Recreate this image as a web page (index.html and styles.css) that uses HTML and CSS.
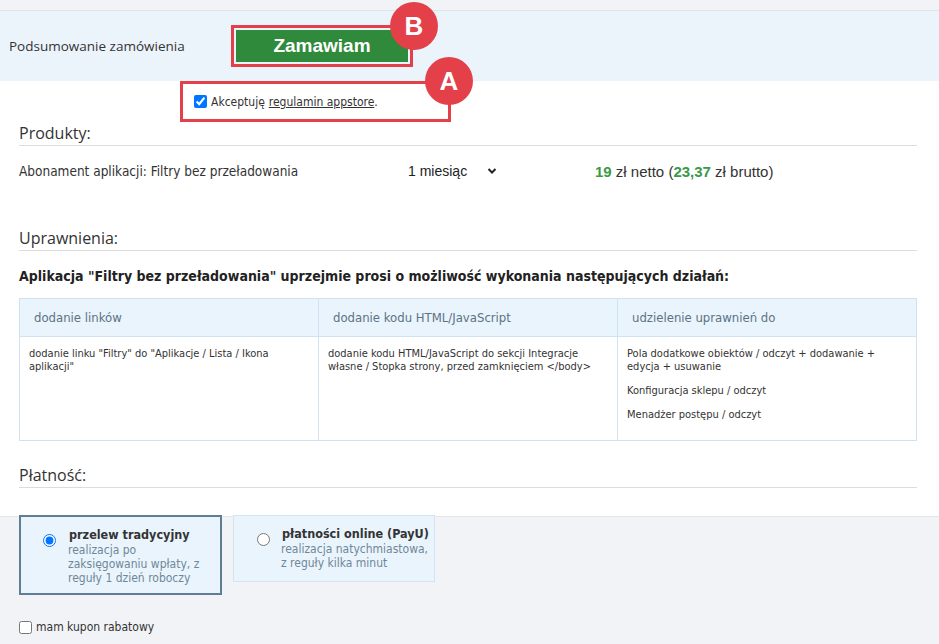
FILE: index.html
```html
<!DOCTYPE html>
<html lang="pl">
<head>
  <meta charset="UTF-8" />
  <meta name="viewport" content="width=device-width, initial-scale=1.0" />
  <title>Podsumowanie zamówienia</title>
  <link rel="stylesheet" href="styles.css">
</head>
<body>
  <div class="topbar"></div>

  <div class="summary">
    <div class="summary-title">Podsumowanie zamówienia</div>
    <div class="mark mark-button">
      <button class="order-button">Zamawiam</button>
      <span class="badge badge-b">B</span>
    </div>
  </div>

  <div class="mark mark-accept">
    <label class="accept"><input type="checkbox" checked> Akceptuję <a href="#">regulamin appstore</a>.</label>
    <span class="badge badge-a">A</span>
  </div>

  <div class="content">
    <h3 class="section-title">Produkty:</h3>
    <div class="product">
      <div class="product-name">Abonament aplikacji: Filtry bez przeładowania</div>
      <div class="product-period">1 miesiąc
        <svg class="chevron" width="10" height="8" viewBox="0 0 10 8"><path d="M1.5 2 L5 5.5 L8.5 2" fill="none" stroke="#222" stroke-width="2"/></svg>
      </div>
      <div class="product-price"><b>19</b> zł netto (<b>23,37</b> zł brutto)</div>
    </div>

    <h3 class="section-title perms-title">Uprawnienia:</h3>
    <p class="perms-intro">Aplikacja "Filtry bez przeładowania" uprzejmie prosi o możliwość wykonania następujących działań:</p>

    <table class="perms">
      <thead>
        <tr>
          <th>dodanie linków</th>
          <th>dodanie kodu HTML/JavaScript</th>
          <th>udzielenie uprawnień do</th>
        </tr>
      </thead>
      <tbody>
        <tr>
          <td><p>dodanie linku "Filtry" do "Aplikacje / Lista / Ikona aplikacji"</p></td>
          <td><p>dodanie kodu HTML/JavaScript do sekcji Integracje własne / Stopka strony, przed zamknięciem &lt;/body&gt;</p></td>
          <td>
            <p>Pola dodatkowe obiektów / odczyt + dodawanie + edycja + usuwanie</p>
            <p>Konfiguracja sklepu / odczyt</p>
            <p>Menadżer postępu / odczyt</p>
          </td>
        </tr>
      </tbody>
    </table>

    <h3 class="section-title pay-title">Płatność:</h3>
  </div>

  <div class="payment">
    <div class="pay-options">
      <label class="pay-option selected">
        <input type="radio" name="pay" checked>
        <span class="pay-text"><b>przelew tradycyjny</b><span>realizacja po zaksięgowaniu wpłaty, z reguły 1 dzień roboczy</span></span>
      </label>
      <label class="pay-option">
        <input type="radio" name="pay">
        <span class="pay-text"><b>płatności online (PayU)</b><span>realizacja natychmiastowa, z reguły kilka minut</span></span>
      </label>
    </div>
    <label class="coupon"><input type="checkbox"> mam kupon rabatowy</label>
  </div>
</body>
</html>
```

FILE: styles.css
```css
body {
  margin: 0;
  background: #ffffff;
  color: #333;
  font-family: "DejaVu Sans Condensed", "DejaVu Sans", sans-serif;
}
.topbar {
  height: 10px;
  background: #f2f3f7;
  border-bottom: 1px solid #e1e4e9;
}
.summary {
  display: flex;
  align-items: center;
  height: 70px;
  background: #ecf4fb;
  padding-left: 9px;
}
.summary-title {
  width: 222px;
  font-family: "Open Sans", sans-serif;
  font-size: 13.5px;
  color: #333;
}
.mark {
  position: relative;
  border: 3px solid #e3404a;
}
.mark-button {
  padding: 2px;
  display: flex;
}
.order-button {
  width: 172px;
  height: 32px;
  background: #2f8a3c;
  color: #fff;
  border: none;
  font-family: "Liberation Sans", Arial, sans-serif;
  font-weight: bold;
  font-size: 19px;
  cursor: pointer;
}
.badge {
  position: absolute;
  width: 48px;
  height: 48px;
  border-radius: 50%;
  background: #e3404a;
  color: #fff;
  font-family: "Liberation Sans", Arial, sans-serif;
  font-weight: bold;
  font-size: 26px;
  display: flex;
  align-items: center;
  justify-content: center;
}
.badge-b {
  top: -26px;
  right: -28px;
}
.badge-a {
  top: -27px;
  right: -25px;
}
.mark-accept {
  margin-left: 180px;
  width: 254px;
  height: 35px;
  display: flex;
  align-items: center;
  padding-left: 11px;
}
.accept {
  font-size: 12px;
  color: #333;
  display: flex;
  align-items: center;
}
.accept input {
  margin: 0 4px 0 0;
  width: 13px;
  height: 13px;
}
.accept a {
  color: #333;
  margin-left: 4px;
}
.content {
  padding: 0 22px 0 19px;
}
.section-title {
  margin: 0;
  font-family: "Open Sans", sans-serif;
  font-weight: normal;
  font-size: 16px;
  color: #333;
  padding: 0 0 2px;
  line-height: 20px;
  border-bottom: 1px solid #dcdcdc;
}
.section-title:first-child {
  margin-top: 1px;
}
.product {
  display: flex;
  align-items: center;
  height: 50px;
  font-size: 13.5px;
}
.product-name {
  width: 389px;
  color: #333;
}
.product-period {
  width: 187px;
  font-family: "Liberation Sans", Arial, sans-serif;
  font-size: 14px;
  color: #222;
  display: flex;
  align-items: center;
}
.chevron {
  margin-left: 20px;
}
.product-price {
  font-family: "Liberation Sans", Arial, sans-serif;
  font-size: 15px;
  color: #333;
}
.product-price b {
  color: #3a9a47;
}
.perms-title {
  margin-top: 32px;
}
.perms-intro {
  margin: 17px 0 14px;
  font-weight: bold;
  font-size: 14px;
  color: #222;
}
.perms {
  width: 100%;
  border-collapse: collapse;
  table-layout: fixed;
  font-size: 11px;
}
.perms th {
  background: #eaf4fd;
  border: 1px solid #cfe3f3;
  text-align: left;
  font-weight: normal;
  font-size: 13px;
  color: #5b7384;
  height: 37px;
  padding: 0 14px;
}
.perms td {
  border: 1px solid #cfe3f3;
  vertical-align: top;
  height: 93px;
  padding: 10px 14px 0 9px;
  color: #333;
}
.perms td p {
  margin: 0 0 11px;
  line-height: 13px;
}
.pay-title {
  margin-top: 24px;
}
.payment {
  margin-top: 28px;
  background: #f2f3f7;
  border-top: 1px solid #e3e5ea;
  padding: 0 19px 10px;
  min-height: 126px;
}
.pay-options {
  display: flex;
  gap: 11px;
  align-items: flex-start;
  margin-top: -2px;
}
.pay-option {
  display: flex;
  align-items: flex-start;
  background: #eaf4fd;
  border: 1px solid #d3e5f5;
  width: 202px;
  box-sizing: border-box;
  padding: 10px 2px 11px 20px;
}
.pay-option.selected {
  border: 2px solid #5f7d95;
  width: 203px;
  padding: 10px 4px 8px 19px;
}
.pay-option input {
  margin: 7px 11px 0 3px;
  width: 13px;
  height: 13px;
  flex: none;
}
.selected input {
  margin-right: 12px;
}
.pay-text {
  font-size: 12.5px;
  color: #333;
  display: flex;
  flex-direction: column;
  width: 152px;
}
.pay-text b {
  line-height: 16px;
  margin-left: 1px;
  white-space: nowrap;
}
.pay-text span {
  color: #6f8798;
  font-size: 12px;
  line-height: 14px;
}
.selected .pay-text {
  width: 132px;
}
.coupon {
  display: flex;
  align-items: center;
  margin-top: 25px;
  font-size: 12px;
  color: #333;
}
.coupon input {
  margin: 0 4px 0 0;
  width: 13px;
  height: 13px;
}
```
